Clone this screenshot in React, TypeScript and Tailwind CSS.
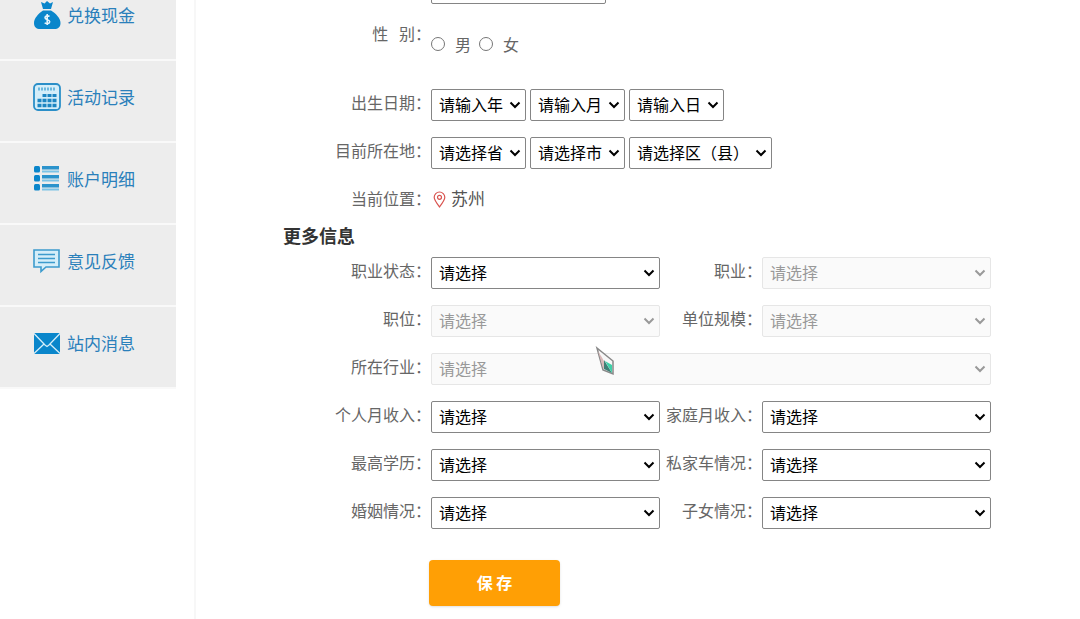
import React, { useState } from "react";

type Field = {
  id: string;
  label: string;
  disabled?: boolean;
  wide?: boolean;
};

const fields: Field[] = [
  { id: "jobStatus", label: "职业状态：" },
  { id: "job", label: "职业：", disabled: true },
  { id: "position", label: "职位：", disabled: true },
  { id: "companySize", label: "单位规模：", disabled: true },
  { id: "industry", label: "所在行业：", disabled: true, wide: true },
  { id: "income", label: "个人月收入：" },
  { id: "familyIncome", label: "家庭月收入：" },
  { id: "education", label: "最高学历：" },
  { id: "car", label: "私家车情况：" },
  { id: "marriage", label: "婚姻情况：" },
  { id: "children", label: "子女情况：" },
];

const MoneyIcon = () => (
  <svg width="28" height="30" viewBox="0 0 28 30">
    <path
      d="M8 2l3.500 1.500L14 1l3 2.500L20 2l-2 7h-8z M10 10.500h8c5 3 9.500 8 9.500 12.500 0 4-2.500 6-6 6H7c-3.500 0-6-2-6-6C1 18.500 5.500 13.500 10 10.500z"
      fill="#0a86cb"
    />
    <path
      d="M16.500 16.500c-1-1-4.500-1-4.500 1.300 0 2.500 4.700 1.500 4.700 4 0 2.200-3.700 2.400-5 1M14.200 14v11"
      fill="none"
      stroke="#e6f4fb"
      strokeWidth="1.600"
    />
  </svg>
);

const CalendarIcon = () => (
  <svg width="28" height="28" viewBox="0 0 28 28">
    <rect x="1" y="1" width="26" height="26" rx="4" fill="#d5eef9" stroke="#2b8fc8" strokeWidth="1.800" />
    <path d="M5 6h18" stroke="#6bb8de" strokeWidth="3" strokeDasharray="2 1" />
    <path d="M9.500 12.500h14" stroke="#1d86c2" strokeWidth="3" strokeDasharray="4 1" />
    <path d="M4.500 17.500h19M4.500 22.500h19" stroke="#1d86c2" strokeWidth="3.500" strokeDasharray="4 1" />
  </svg>
);

const ListIcon = () => (
  <svg width="28" height="28" viewBox="0 0 28 28">
    {[1, 10, 19].map((y) => (
      <g key={y}>
        <rect x="1" y={y} width="6" height="6.500" rx="1.500" fill="#0a86cb" />
        <rect x="9" y={y} width="17" height="3.500" fill="#2b93cc" />
        <rect x="9" y={y + 4.5} width="17" height="2" fill="#7cc3e6" />
      </g>
    ))}
  </svg>
);

const FeedbackIcon = () => (
  <svg width="28" height="28" viewBox="0 0 28 28">
    <path
      d="M1 3h25v17H13l-5 4.500V20H1z"
      fill="#d5eef9"
      stroke="#3c9bcd"
      strokeWidth="1.600"
    />
    <path d="M5 7.500h17M5 11.500h17M5 15.500h17" stroke="#3c9bcd" strokeWidth="1.500" />
  </svg>
);

const MailIcon = () => (
  <svg width="28" height="28" viewBox="0 0 28 28">
    <rect x="1" y="4" width="26" height="21" rx="1" fill="#0a86cb" />
    <path
      d="M1 4.500l11 11.500 2 1.500 2-1.500L27 4.500M1 24.500l10-9.500M27 24.500L17 15"
      fill="none"
      stroke="#d5eef9"
      strokeWidth="1.300"
    />
  </svg>
);

const menu = [
  { text: "兑换现金", icon: <MoneyIcon /> },
  { text: "活动记录", icon: <CalendarIcon /> },
  { text: "账户明细", icon: <ListIcon /> },
  { text: "意见反馈", icon: <FeedbackIcon /> },
  { text: "站内消息", icon: <MailIcon /> },
];

type SelectProps = {
  id: string;
  text: string;
  label?: string;
  disabled?: boolean;
  full?: boolean;
};

const Select = ({ id, text, label, disabled, full }: SelectProps) => (
  <div className={full ? "relative w-full" : "relative"}>
    <select
      id={id}
      aria-label={label}
      disabled={disabled}
      className={`h-8 appearance-none rounded-[2px] border pb-[2px] pl-[7px] pr-[21px] text-base ${
        full ? "w-full" : ""
      } ${
        disabled
          ? "border-[#e6e6e6] bg-[#fafafa] text-[#999999]"
          : "border-[#858585] bg-white text-black"
      }`}
    >
      <option>{text}</option>
    </select>
    <svg
      className={`pointer-events-none absolute right-[5px] top-[10px] ${
        disabled ? "text-[#999999]" : "text-black"
      }`}
      width="12"
      height="12"
      viewBox="0 0 12 12"
    >
      <path d="M1.500 3.500L6 8l4.500-4.500" fill="none" stroke="currentColor" strokeWidth="2" />
    </svg>
  </div>
);

const labelStyle = "text-right leading-[26px] text-[#666666] whitespace-nowrap";

const App = () => {
  const [gender, setGender] = useState("");

  return (
    <div className="relative flex min-h-screen overflow-hidden bg-white text-base font-['Noto_Sans_CJK_SC','Liberation_Sans',sans-serif]">
      <nav className="-mt-[21px] mr-[18px] w-44 shrink-0">
        {menu.map((item) => (
          <a
            key={item.text}
            href="#"
            className="flex h-[82px] items-center gap-[6px] border-b-2 border-[#f9f9f9] bg-[#ededed] pb-2 pl-[33px] text-[17px] text-[#2a80bb]"
          >
            {item.icon}
            <span>{item.text}</span>
          </a>
        ))}
      </nav>

      <main className="flex-1 border-l-2 border-[#f7f7f7] pl-[87px]">
        <form className="-mt-7 max-w-[708px]" onSubmit={(e) => e.preventDefault()}>
          <div className="grid grid-cols-[148px_1fr] gap-y-4">
            <input
              type="text"
              aria-label="昵称"
              className="col-start-2 h-8 w-[175px] rounded-[2px] border border-[#858585] px-2"
            />

            <span id="gender" className={labelStyle}>
              性&nbsp;&nbsp;&nbsp;别：
            </span>
            <div
              role="radiogroup"
              aria-labelledby="gender"
              className="flex items-start gap-2 pb-[13px] pt-2 text-[#666666]"
            >
              {["男", "女"].map((g) => (
                <label key={g} className="flex h-8 items-center gap-[10px]">
                  <input
                    type="radio"
                    name="gender"
                    checked={gender === g}
                    onChange={() => setGender(g)}
                    className="h-[14px] w-[14px] appearance-none rounded-full border border-[#767676] checked:border-4"
                  />
                  {g}
                </label>
              ))}
            </div>

            <label htmlFor="year" className={labelStyle}>
              出生日期：
            </label>
            <div className="flex gap-1">
              <Select id="year" text="请输入年" />
              <Select id="month" text="请输入月" label="月" />
              <Select id="day" text="请输入日" label="日" />
            </div>

            <label htmlFor="province" className={labelStyle}>
              目前所在地：
            </label>
            <div className="flex gap-1">
              <Select id="province" text="请选择省" />
              <Select id="city" text="请选择市" label="市" />
              <Select id="district" text="请选择区（县）" label="区（县）" />
            </div>

            <span className={labelStyle}>当前位置：</span>
            <div className="flex h-8 items-start gap-[5px] pl-[2px] leading-[26px] text-[#555555]">
              <svg className="mt-[6px]" width="13" height="17" viewBox="0 0 13 17">
                <path
                  d="M6.500 16C3.500 12 1.200 9 1.200 6.300a5.300 5.300 0 0 1 10.600 0C11.800 9 9.500 12 6.500 16z"
                  fill="none"
                  stroke="#d95450"
                  strokeWidth="1.200"
                />
                <circle cx="6.500" cy="6.300" r="2" fill="none" stroke="#d95450" strokeWidth="1.200" />
              </svg>
              <span className="text-[17px]">苏州</span>
            </div>
          </div>

          <h2 className="h-10 text-lg font-bold leading-9 text-[#333333]">更多信息</h2>

          <div className="grid grid-cols-[148px_1fr_102px_1fr] gap-y-4">
            {fields.map((f) => (
              <React.Fragment key={f.id}>
                <label htmlFor={f.id} className={labelStyle}>
                  {f.label}
                </label>
                <div className={f.wide ? "col-span-3" : ""}>
                  <Select id={f.id} text="请选择" disabled={f.disabled} full />
                </div>
              </React.Fragment>
            ))}
          </div>

          <button
            type="submit"
            className="ml-[146px] mt-[31px] h-[46px] w-[131px] rounded bg-[#ff9f05] pb-[2px] font-bold text-white shadow-sm"
          >
            保 存
          </button>
        </form>
      </main>

      {/* mouse pointer */}
      <svg
        className="pointer-events-none absolute left-[595px] top-[346px]"
        width="21"
        height="30"
        viewBox="0 0 21 30"
      >
        <path d="M2 2l16 13v13l-10-4z" fill="#f7f7f7" stroke="#888888" strokeWidth="1.500" />
        <path d="M3 5l6 10v8l-1-1z" fill="#d9b8b8" />
        <path d="M9 14l8 13-8-4z" fill="#3f7f76" />
        <path d="M10 15l7 4v8z" fill="#3fd0a8" />
      </svg>
    </div>
  );
};

export default App;
